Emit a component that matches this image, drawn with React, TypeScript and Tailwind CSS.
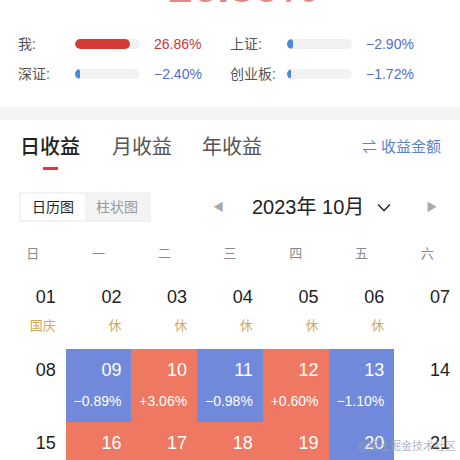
import React from 'react';

const font = { fontFamily: '"Liberation Sans", "Noto Sans CJK SC", sans-serif' };

const StatRow: React.FC<{ label: string; fill: number; color: string; value: string; valueColor: string }> = ({
    label,
    fill,
    color,
    value,
    valueColor,
}) => (
    <div className="flex items-center w-[212px]">
        <span className="w-[57px] text-[14px] text-[#555]">{label}</span>
        <div className="w-[65px] h-[10px] rounded-full bg-[#f2f2f2] overflow-hidden">
            <div className={`h-full rounded-full ${color}`} style={{ width: `${fill}px` }} />
        </div>
        <span className={`ml-[14px] text-[14px] ${valueColor}`}>{value}</span>
    </div>
);

type Cell = { d: string; label?: string; pct?: string; tone?: 'up' | 'down' };

const rows: Cell[][] = [
    [
        { d: '01', label: '国庆' },
        { d: '02', label: '休' },
        { d: '03', label: '休' },
        { d: '04', label: '休' },
        { d: '05', label: '休' },
        { d: '06', label: '休' },
        { d: '07' },
    ],
    [
        { d: '08' },
        { d: '09', pct: '−0.89%', tone: 'down' },
        { d: '10', pct: '+3.06%', tone: 'up' },
        { d: '11', pct: '−0.98%', tone: 'down' },
        { d: '12', pct: '+0.60%', tone: 'up' },
        { d: '13', pct: '−1.10%', tone: 'down' },
        { d: '14' },
    ],
    [
        { d: '15' },
        { d: '16', pct: '+1.02%', tone: 'up' },
        { d: '17', pct: '+0.45%', tone: 'up' },
        { d: '18', pct: '+0.33%', tone: 'up' },
        { d: '19', pct: '+0.21%', tone: 'up' },
        { d: '20', pct: '−0.52%', tone: 'down' },
        { d: '21' },
    ],
];

const DayCell: React.FC<{ cell: Cell }> = ({ cell }) => {
    const bg = cell.tone === 'up' ? 'bg-[#ee7862]' : cell.tone === 'down' ? 'bg-[#7089db]' : '';
    const text = cell.tone ? 'text-white' : 'text-[#222]';
    return (
        <div className={`h-[73px] flex flex-col items-end pr-[10px] pt-[10px] ${bg}`}>
            <span className={`text-[18px] leading-[22px] ${text}`}>{cell.d}</span>
            {cell.label && <span className="mt-[10px] text-[13px] leading-[16px] text-[#d5a55c]">{cell.label}</span>}
            {cell.pct && <span className="mt-[12px] text-[14px] leading-[16px] text-white">{cell.pct}</span>}
        </div>
    );
};

const App: React.FC = () => {
    return (
        <div className="relative w-[460px] h-[460px] overflow-hidden bg-white" style={font}>
            {/* clipped headline */}
            <div className="h-[4px] overflow-hidden flex justify-center items-end">
                <span className="shrink-0 text-[44px] leading-[44px] font-bold text-[#e08a86] mb-[-5px]">+26.86%</span>
            </div>

            <div className="pt-[25px] pb-[18px] pl-[18px]">
                <div className="h-[30px] flex items-center">
                    <StatRow label="我:" fill={55} color="bg-[#d63c37]" value="26.86%" valueColor="text-[#c4393a]" />
                    <StatRow label="上证:" fill={6} color="bg-[#4f86de]" value="−2.90%" valueColor="text-[#4f6fcc]" />
                </div>
                <div className="h-[30px] flex items-center">
                    <StatRow label="深证:" fill={5} color="bg-[#4f86de]" value="−2.40%" valueColor="text-[#4f6fcc]" />
                    <StatRow label="创业板:" fill={4} color="bg-[#4f86de]" value="−1.72%" valueColor="text-[#4f6fcc]" />
                </div>
            </div>

            <div className="h-[13px] bg-[#f4f4f4]" />

            {/* tabs */}
            <div className="pt-[7px] px-[20px]">
                <div className="h-[40px] flex items-center">
                    <span className="text-[20px] font-medium text-[#222]">日收益</span>
                    <span className="ml-[32px] text-[20px] text-[#555]">月收益</span>
                    <span className="ml-[30px] text-[20px] text-[#555]">年收益</span>
                    <span className="ml-auto mr-[-1px] text-[15px] text-[#5a85c8]">⇌ 收益金额</span>
                </div>
                <div className="w-[61px] flex justify-center">
                    <div className="w-[15px] h-[3px] bg-[#d63c37]" />
                </div>
            </div>

            {/* view switch + month */}
            <div className="mt-[22px] pl-[19px] flex items-center h-[30px]">
                <div className="w-[132px] h-[30px] bg-[#f3f3f3] p-[2px] flex text-[14px]">
                    <div className="w-[64px] bg-white flex items-center justify-center text-[#222]">日历图</div>
                    <div className="flex-1 flex items-center justify-center text-[#999]">柱状图</div>
                </div>
                <span className="ml-[62px] text-[11px] text-[#aaa]">◀</span>
                <span className="ml-[28px] text-[20px] text-[#222]">2023年 10月</span>
                <svg className="ml-[13px]" width="14" height="9" viewBox="0 0 14 9" fill="none">
                    <path d="M1 1.5L7 7.5L13 1.5" stroke="#333" strokeWidth="1.6" />
                </svg>
                <span className="ml-[35px] text-[11px] text-[#aaa]">▶</span>
            </div>

            {/* weekdays */}
            <div className="mt-[18px] h-[28px] grid grid-cols-7 items-center text-[13px] text-[#888]">
                {['日', '一', '二', '三', '四', '五', '六'].map((w) => (
                    <span key={w} className="text-center">
                        {w}
                    </span>
                ))}
            </div>

            <div className="mt-[8px] grid grid-cols-7">
                {rows.flat().map((c) => (
                    <DayCell key={c.d} cell={c} />
                ))}
            </div>

            <span className="absolute right-[4px] bottom-[6px] text-[11px] text-[#9aa3b5]/80">@稀土掘金技术社区</span>
        </div>
    );
};

export default App;
